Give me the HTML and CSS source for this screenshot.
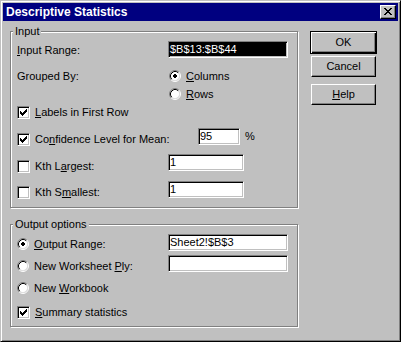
FILE: index.html
```html
<!DOCTYPE html>
<html>
<head>
<meta charset="utf-8">
<title>Descriptive Statistics</title>
<link rel="stylesheet" href="styles.css">
</head>
<body>
<div class="win">
  <div class="titlebar">
    <span class="ttl">Descriptive Statistics</span>
    <span class="xbtn"><svg width="14" height="12" viewBox="1 1 14 12"><path d="M4 3h2v1h-2zM10 3h2v1h-2zM5 4h2v1h-2zM9 4h2v1h-2zM6 5h4v1h-4zM7 6h2v1h-2zM6 7h4v1h-4zM5 8h2v1h-2zM9 8h2v1h-2zM4 9h2v1h-2zM10 9h2v1h-2z" fill="#000"/></svg></span>
  </div>
  <div class="main">
    <div class="left">
      <div class="group g-in">
        <div class="gtitle">Input</div>
        <div class="row fr mt3">
          <div class="lbl w151 lm3"><span><u>I</u>nput Range:</span></div>
          <div class="edit wide sel">$B$13:$B$44</div>
        </div>
        <div class="row rr mt12">
          <div class="lbl w152 h12">Grouped By:</div>
          <div class="lbl h12">
            <svg class="rb" width="12" height="12" viewBox="0 0 12 12"><circle cx="6" cy="6" r="4.5" fill="#fff"/><path d="M2.11 9.89A5.5 5.5 0 0 1 9.89 2.11" fill="none" stroke="#808080"/><path d="M9.89 2.11A5.5 5.5 0 0 1 2.11 9.89" fill="none" stroke="#fff"/><path d="M2.82 9.18A4.5 4.5 0 0 1 9.18 2.82" fill="none" stroke="#000"/><path d="M9.18 2.82A4.5 4.5 0 0 1 2.82 9.18" fill="none" stroke="#dfdfdf"/><path d="M5 4h2v1h1v2h-1v1h-2v-1h-1v-2h1z" fill="#000"/></svg>
            <span><u>C</u>olumns</span>
          </div>
        </div>
        <div class="row rr mt6">
          <div class="lbl w152 h12"></div>
          <div class="lbl h12">
            <svg class="rb" width="12" height="12" viewBox="0 0 12 12"><circle cx="6" cy="6" r="4.5" fill="#fff"/><path d="M2.11 9.89A5.5 5.5 0 0 1 9.89 2.11" fill="none" stroke="#808080"/><path d="M9.89 2.11A5.5 5.5 0 0 1 2.11 9.89" fill="none" stroke="#fff"/><path d="M2.82 9.18A4.5 4.5 0 0 1 9.18 2.82" fill="none" stroke="#000"/><path d="M9.18 2.82A4.5 4.5 0 0 1 2.82 9.18" fill="none" stroke="#dfdfdf"/></svg>
            <span><u>R</u>ows</span>
          </div>
        </div>
        <div class="row cr mt6">
          <div class="lbl">
            <span class="cb"><svg width="7" height="7" viewBox="0 0 7 7"><path d="M6 0h1v1h-1zM5 1h2v1h-2zM0 2h1v1h-1zM4 2h3v1h-3zM0 3h2v1h-2zM3 3h3v1h-3zM0 4h5v1h-5zM1 5h3v1h-3zM2 6h1v1h-1z" fill="#000"/></svg></span>
            <span><u>L</u>abels in First Row</span>
          </div>
        </div>
        <div class="row fr mt9">
          <div class="lbl w181 lm5">
            <span class="cb"><svg width="7" height="7" viewBox="0 0 7 7"><path d="M6 0h1v1h-1zM5 1h2v1h-2zM0 2h1v1h-1zM4 2h3v1h-3zM0 3h2v1h-2zM3 3h3v1h-3zM0 4h5v1h-5zM1 5h3v1h-3zM2 6h1v1h-1z" fill="#000"/></svg></span>
            <span>Co<u>n</u>fidence Level for Mean:</span>
          </div>
          <div class="edit conf">95</div>
          <div class="pct">%</div>
        </div>
        <div class="row fr mt9">
          <div class="lbl w151 lm6">
            <span class="cb"></span>
            <span>Kth L<u>a</u>rgest:</span>
          </div>
          <div class="edit kth">1</div>
        </div>
        <div class="row fr mt10">
          <div class="lbl w151 lm5">
            <span class="cb"></span>
            <span>Kth S<u>m</u>allest:</span>
          </div>
          <div class="edit kth">1</div>
        </div>
      </div>

      <div class="group g-out">
        <div class="gtitle">Output options</div>
        <div class="row fr mt3">
          <div class="lbl w151 h12 lm4">
            <svg class="rb" width="12" height="12" viewBox="0 0 12 12"><circle cx="6" cy="6" r="4.5" fill="#fff"/><path d="M2.11 9.89A5.5 5.5 0 0 1 9.89 2.11" fill="none" stroke="#808080"/><path d="M9.89 2.11A5.5 5.5 0 0 1 2.11 9.89" fill="none" stroke="#fff"/><path d="M2.82 9.18A4.5 4.5 0 0 1 9.18 2.82" fill="none" stroke="#000"/><path d="M9.18 2.82A4.5 4.5 0 0 1 2.82 9.18" fill="none" stroke="#dfdfdf"/><path d="M5 4h2v1h1v2h-1v1h-2v-1h-1v-2h1z" fill="#000"/></svg>
            <span><u>O</u>utput Range:</span>
          </div>
          <div class="edit wide">Sheet2!$B$3</div>
        </div>
        <div class="row fr mt4">
          <div class="lbl w151 h12 lm5">
            <svg class="rb" width="12" height="12" viewBox="0 0 12 12"><circle cx="6" cy="6" r="4.5" fill="#fff"/><path d="M2.11 9.89A5.5 5.5 0 0 1 9.89 2.11" fill="none" stroke="#808080"/><path d="M9.89 2.11A5.5 5.5 0 0 1 2.11 9.89" fill="none" stroke="#fff"/><path d="M2.82 9.18A4.5 4.5 0 0 1 9.18 2.82" fill="none" stroke="#000"/><path d="M9.18 2.82A4.5 4.5 0 0 1 2.82 9.18" fill="none" stroke="#dfdfdf"/></svg>
            <span>New Worksheet <u>P</u>ly:</span>
          </div>
          <div class="edit wide"></div>
        </div>
        <div class="row rr mt10">
          <div class="lbl h12">
            <svg class="rb" width="12" height="12" viewBox="0 0 12 12"><circle cx="6" cy="6" r="4.5" fill="#fff"/><path d="M2.11 9.89A5.5 5.5 0 0 1 9.89 2.11" fill="none" stroke="#808080"/><path d="M9.89 2.11A5.5 5.5 0 0 1 2.11 9.89" fill="none" stroke="#fff"/><path d="M2.82 9.18A4.5 4.5 0 0 1 9.18 2.82" fill="none" stroke="#000"/><path d="M9.18 2.82A4.5 4.5 0 0 1 2.82 9.18" fill="none" stroke="#dfdfdf"/></svg>
            <span>New <u>W</u>orkbook</span>
          </div>
        </div>
        <div class="row cr mt12">
          <div class="lbl">
            <span class="cb"><svg width="7" height="7" viewBox="0 0 7 7"><path d="M6 0h1v1h-1zM5 1h2v1h-2zM0 2h1v1h-1zM4 2h3v1h-3zM0 3h2v1h-2zM3 3h3v1h-3zM0 4h5v1h-5zM1 5h3v1h-3zM2 6h1v1h-1z" fill="#000"/></svg></span>
            <span><u>S</u>ummary statistics</span>
          </div>
        </div>
      </div>
    </div>

    <div class="btns">
      <div class="btn def">OK</div>
      <div class="btn b-cancel">Cancel</div>
      <div class="btn b-help"><span><u>H</u>elp</span></div>
    </div>
  </div>
</div>
</body>
</html>
```

FILE: styles.css
```css
* { box-sizing: border-box; }
html, body { margin: 0; padding: 0; background: #c0c0c0; }
body {
  font-family: "Liberation Sans", Arial, sans-serif;
  font-size: 11px;
  color: #000;
}
.win {
  width: 401px;
  height: 342px;
  background: #c0c0c0;
  border: 1px solid;
  border-color: #c0c0c0 #000 #000 #c0c0c0;
  box-shadow: inset 1px 1px #fff, inset -1px -1px #808080;
  padding: 2px;
  display: flex;
  flex-direction: column;
}
.titlebar {
  height: 18px;
  flex: none;
  background: #000080;
  color: #fff;
  display: flex;
  align-items: center;
  justify-content: space-between;
  padding: 0 2px 0 3px;
}
.ttl { font-weight: bold; font-size: 12px; line-height: 14px; white-space: nowrap; }
.xbtn {
  width: 16px;
  height: 14px;
  background: #c0c0c0;
  border: 1px solid;
  border-color: #fff #000 #000 #fff;
  box-shadow: inset -1px -1px #808080;
}
.xbtn svg { display: block; }

.main { display: flex; align-items: flex-start; padding: 10px 0 0 7px; }
.left { width: 288px; flex: none; display: flex; flex-direction: column; }

.group {
  border: 1px solid #808080;
  box-shadow: inset 1px 1px #fff, 1px 1px #fff;
  display: flex;
  flex-direction: column;
  align-items: flex-start;
  padding: 0 6px 9px 6px;
}
.g-out { margin-top: 16px; padding-bottom: 7px; }
.gtitle {
  margin: -7px 0 0 -4px;
  padding: 0 2px;
  background: #c0c0c0;
  height: 13px;
  line-height: 13px;
  white-space: nowrap;
}

.row { display: flex; align-items: flex-start; flex: none; }
.fr { height: 17px; }
.rr { height: 12px; }
.cr { height: 13px; }
.mt3 { margin-top: 3px; }
.mt4 { margin-top: 4px; }
.mt6 { margin-top: 6px; }
.mt9 { margin-top: 9px; }
.mt10 { margin-top: 10px; }
.mt12 { margin-top: 12px; }

.lbl {
  display: flex;
  align-items: center;
  gap: 5px;
  height: 13px;
  line-height: 13px;
  white-space: nowrap;
  flex: none;
}
.h12 { height: 12px; }
.w151 { width: 151px; }
.w152 { width: 152px; }
.w181 { width: 181px; }
.lm3 { margin-top: 3px; }
.lm4 { margin-top: 4px; }
.lm5 { margin-top: 5px; }
.lm6 { margin-top: 6px; }

.rb { display: block; flex: none; }

.cb {
  width: 13px;
  height: 13px;
  flex: none;
  background: #fff;
  border: 1px solid;
  border-color: #808080 #fff #fff #808080;
  box-shadow: inset 1px 1px #000, inset -1px -1px #c0c0c0;
  padding: 2px 0 0 2px;
}
.cb svg { display: block; }

.edit {
  height: 17px;
  flex: none;
  background: #fff;
  border: 1px solid;
  border-color: #808080 #fff #fff #808080;
  box-shadow: inset 1px 1px #000, inset -1px -1px #c0c0c0;
  padding: 0 0 0 1px;
  line-height: 15px;
  white-space: nowrap;
  overflow: hidden;
}
.wide { width: 120px; }
.kth { width: 76px; }
.conf { width: 42px; }
.sel { background: #000; color: #fff; }
.pct { margin: 2px 0 0 5px; line-height: 13px; }

.btns {
  margin-left: 12px;
  width: 67px;
  display: flex;
  flex-direction: column;
  align-items: center;
  flex: none;
}
.btn {
  width: 65px;
  height: 21px;
  border: 1px solid;
  border-color: #fff #000 #000 #fff;
  box-shadow: inset -1px -1px #808080;
  display: flex;
  align-items: center;
  justify-content: center;
  line-height: 13px;
}
.btn.def {
  width: 67px;
  height: 23px;
  border-color: #000;
  box-shadow: inset 1px 1px #fff, inset -1px -1px #000, inset -2px -2px #808080;
}
.b-cancel { margin-top: 2px; }
.b-help { margin-top: 7px; }
```
